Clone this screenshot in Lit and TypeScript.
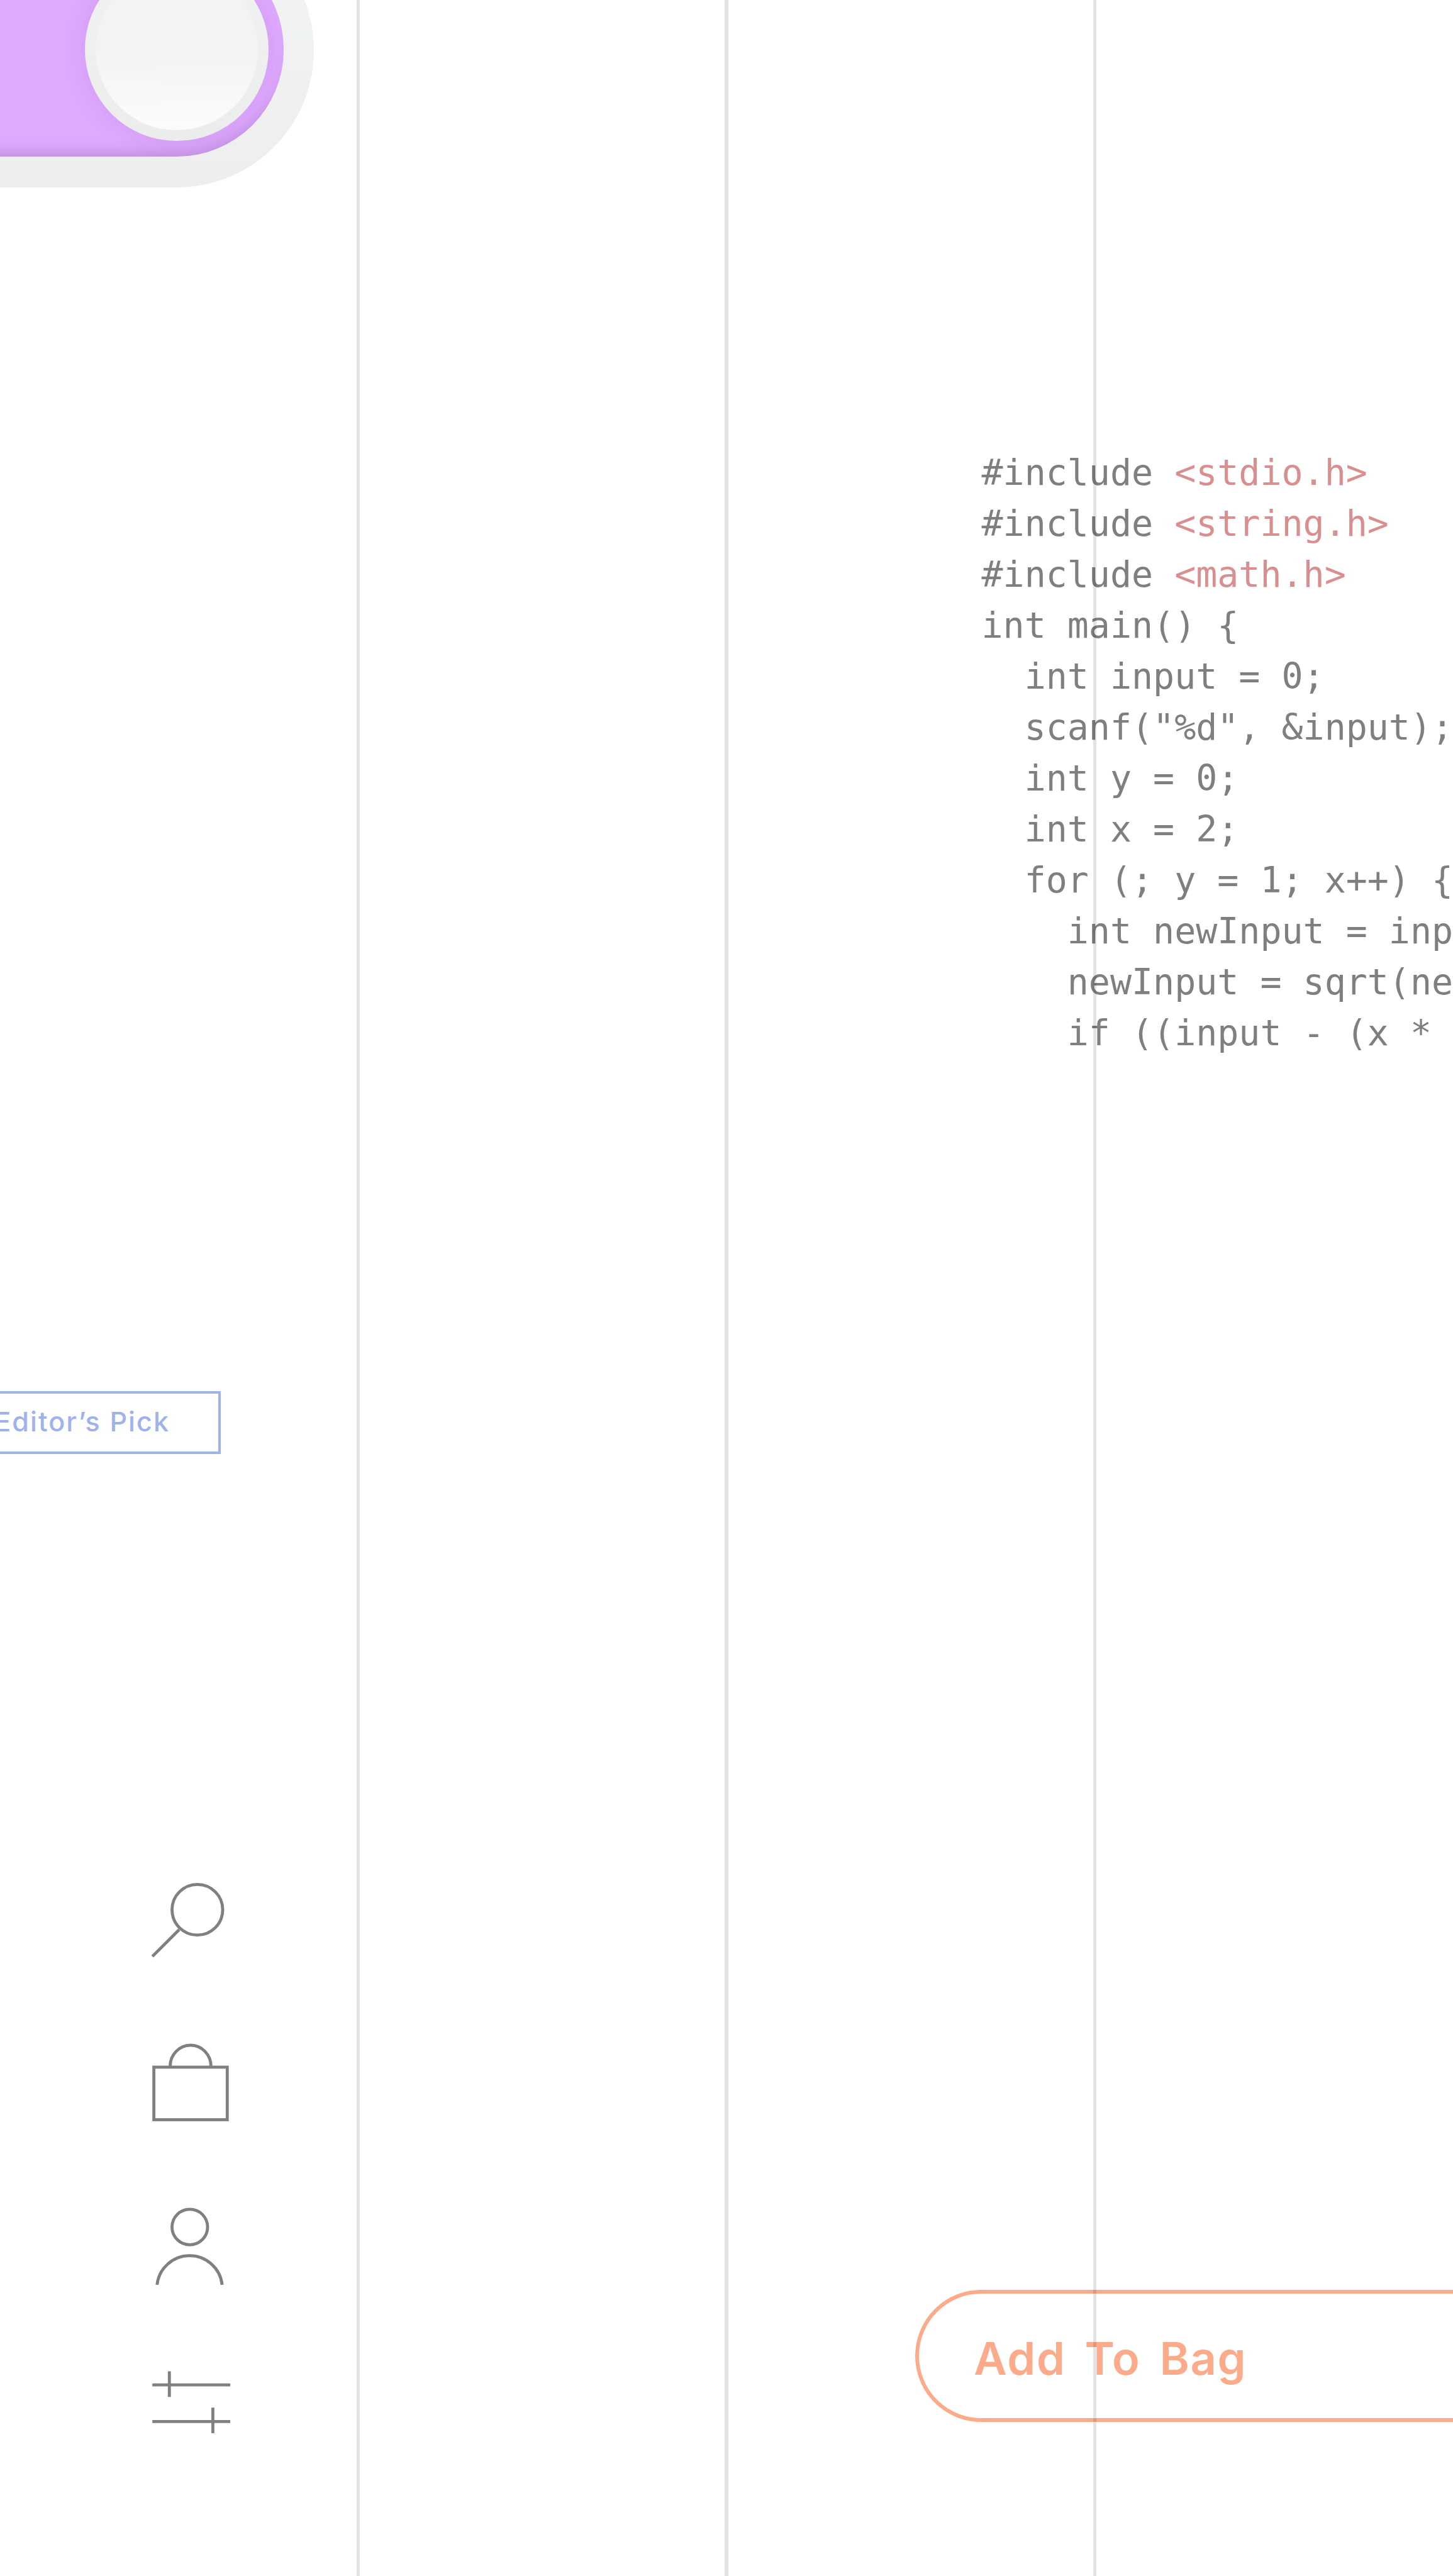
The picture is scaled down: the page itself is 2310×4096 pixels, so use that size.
import { LitElement, html, css } from "lit";
import { customElement } from "lit/decorators.js";

const CODE: [string, string?][] = [
  ["#include ", "<stdio.h>"],
  ["#include ", "<string.h>"],
  ["#include ", "<math.h>"],
  ["int main() {"],
  ["  int input = 0;"],
  ['  scanf("%d", &input);'],
  ["  int y = 0;"],
  ["  int x = 2;"],
  ["  for (; y = 1; x++) {"],
  ["    int newInput = input;"],
  ["    newInput = sqrt(newInput);"],
  ["    if ((input - (x * x)) == 0) {"],
];

@customElement("app-root")
export class AppRoot extends LitElement {
  static styles = css`
    :host { display: block; width: 2310px; height: 4096px; background: #fff; overflow: hidden; position: relative; }
    .page { display: grid; grid-template-columns: 1455px 855px; width: 2310px; height: 4096px; overflow: hidden; }
    .left { display: flex; flex-direction: column; align-items: flex-start; min-width: 0; }

    .track { flex: none; box-sizing: border-box; width: 800px; height: 435.6px; margin: -137.8px 0 0 -301.3px; padding: 46px 48px 49px 48px; border-radius: 217.8px; background: linear-gradient(180deg, #f3f4f4, #eeeeef); }
    .fill { box-sizing: border-box; height: 100%; border-radius: 170px; padding-right: 24px; display: flex; justify-content: flex-end; align-items: center; background: #dfa9ff; overflow: hidden; box-shadow: inset 0 -22px 20px -14px rgba(60, 40, 80, 0.18); }
    .knob { flex: none; box-sizing: border-box; width: 291.4px; height: 291.4px; padding: 17px; border-radius: 50%; background: linear-gradient(180deg, #f1f3f3, #ebeded); box-shadow: 0 0 36px rgba(80, 50, 110, 0.11); }
    .knob-in { width: 100%; height: 100%; border-radius: 50%; background: linear-gradient(180deg, #f2f3f3 50%, #fbfbfb 95%); }

    .badge { flex: none; box-sizing: border-box; width: 400px; height: 99.8px; margin: 1914.2px 0 0 -49.3px; padding: 0 76.6px 2px 0; border: 4.2px solid #a0b2ea; color: #a0b2ea; display: flex; justify-content: flex-end; align-items: center; font: 500 43px/1 "Inter", sans-serif; letter-spacing: 2.1px; white-space: nowrap; }

    .icons { display: flex; flex-direction: column; gap: 132.6px; margin: 678px 0 0 240.6px; }
    .icons svg { display: block; width: 126.3px; fill: none; stroke: #808080; stroke-width: 8; }
    .i-search { height: 123.3px; }
    .i-bag { height: 129.3px; }
    .i-person { height: 127.5px; }
    .i-sliders { height: 103.5px; }

    .right { min-width: 0; }
    .code { margin: 710.9px 0 0 105.5px; font: 400 56.6px/81.04px "DejaVu Sans Mono", monospace; color: #7f7f80; white-space: pre; }
    .code .str { color: #d98e90; }
    .cart { box-sizing: border-box; width: 1200px; height: 210.3px; margin-top: 1957.6px; padding: 8px 0 0 87.3px; border: 6.8px solid #fbab8a; border-radius: 105.2px; display: flex; align-items: center; color: #fbab8a; font: 600 72px/1 "Inter", sans-serif; letter-spacing: 1.7px; word-spacing: 10px; white-space: pre; }

    .guides { position: absolute; inset: 0; display: flex; gap: 580px; padding-left: 567px; pointer-events: none; }
    .guide { width: 5.4px; background: rgba(0, 0, 0, 0.11); }
  `;

  render() {
    return html`
      <div class="page">
        <div class="left">
          <div class="track"><div class="fill"><div class="knob"><div class="knob-in"></div></div></div></div>
          <div class="badge">Editor’s Pick</div>
          <div class="icons">
            <svg class="i-search" viewBox="400 4970 210 205"><circle cx="521" cy="5047.5" r="67"/><path d="M402 5171L473 5100"/></svg>
            <svg class="i-bag" viewBox="400 5395 210 215"><rect x="406" y="5463" width="194" height="139"/><path d="M449 5461A54 56 0 0 1 557 5461"/></svg>
            <svg class="i-person" viewBox="400 5832 210 212"><circle cx="501" cy="5887" r="47"/><path d="M414.5 6040A86.5 86.5 0 0 1 586.5 6040"/></svg>
            <svg class="i-sliders" viewBox="400 6263 210 172"><path d="M402 6303H608M447 6267V6335M402 6400H608M562 6363V6431"/></svg>
          </div>
        </div>
        <div class="right">
          <div class="code">${CODE.map(([a, b]) => html`<div>${a}${b ? html`<span class="str">${b}</span>` : ""}</div>`)}</div>
          <div class="cart">Add To Bag</div>
        </div>
      </div>
      <div class="guides"><div class="guide"></div><div class="guide"></div><div class="guide"></div></div>
    `;
  }
}
